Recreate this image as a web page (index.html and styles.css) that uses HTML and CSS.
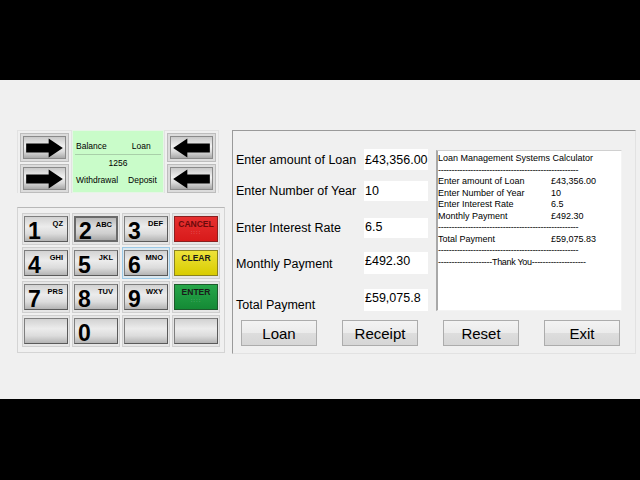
FILE: index.html
```html
<!DOCTYPE html>
<html>
<head>
<meta charset="utf-8">
<link rel="stylesheet" href="styles.css">
</head>
<body>
<div class="screen">
  <div class="bar"></div>
  <div class="app">
    <div class="left">
      <div class="atm-top">
        <div class="arrows">
          <div class="abtn"><div class="abtn-in"><svg viewBox="0 0 46 24" class="arrow"><path d="M1 6.5 H28 V0.5 L45 12 L28 23.5 V17.5 H1 Z"/></svg></div></div>
          <div class="abtn"><div class="abtn-in"><svg viewBox="0 0 46 24" class="arrow"><path d="M1 6.5 H28 V0.5 L45 12 L28 23.5 V17.5 H1 Z"/></svg></div></div>
        </div>
        <div class="green">
          <div class="grow"><span>Balance</span><span class="gr2">Loan</span></div>
          <div class="gmid">1256</div>
          <div class="grow"><span>Withdrawal</span><span class="gr3">Deposit</span></div>
        </div>
        <div class="arrows">
          <div class="abtn"><div class="abtn-in"><svg viewBox="0 0 46 24" class="arrow"><path d="M45 6.5 H18 V0.5 L1 12 L18 23.5 V17.5 H45 Z"/></svg></div></div>
          <div class="abtn"><div class="abtn-in"><svg viewBox="0 0 46 24" class="arrow"><path d="M45 6.5 H18 V0.5 L1 12 L18 23.5 V17.5 H45 Z"/></svg></div></div>
        </div>
      </div>
      <div class="keypad">
        <div class="key"><div class="kin"><b>1</b><i>QZ</i></div></div>
        <div class="key"><div class="kin pressed"><b>2</b><i>ABC</i></div></div>
        <div class="key"><div class="kin"><b>3</b><i>DEF</i></div></div>
        <div class="key"><div class="kin red"><em>CANCEL</em><small>::::</small></div></div>
        <div class="key"><div class="kin"><b>4</b><i>GHI</i></div></div>
        <div class="key"><div class="kin"><b>5</b><i>JKL</i></div></div>
        <div class="key focus"><div class="kin"><b>6</b><i>MNO</i></div></div>
        <div class="key"><div class="kin yellow"><em>CLEAR</em><small></small></div></div>
        <div class="key"><div class="kin"><b>7</b><i>PRS</i></div></div>
        <div class="key"><div class="kin"><b>8</b><i>TUV</i></div></div>
        <div class="key"><div class="kin"><b>9</b><i>WXY</i></div></div>
        <div class="key"><div class="kin green-k"><em>ENTER</em><small>::::</small></div></div>
        <div class="key"><div class="kin"></div></div>
        <div class="key"><div class="kin"><b>0</b></div></div>
        <div class="key"><div class="kin"></div></div>
        <div class="key"><div class="kin"></div></div>
      </div>
    </div>
    <div class="panel">
      <div class="panel-body">
        <div class="form">
          <div class="frow r1"><span class="lbl">Enter amount of Loan</span><span class="inp">£43,356.00</span></div>
          <div class="frow r2"><span class="lbl">Enter Number of Year</span><span class="inp">10</span></div>
          <div class="frow r3"><span class="lbl">Enter Interest Rate</span><span class="inp top">6.5</span></div>
          <div class="frow r4"><span class="lbl low">Monthly Payment</span><span class="inp top">£492.30</span></div>
          <div class="frow r5"><span class="lbl low2">Total Payment</span><span class="inp top">£59,075.8</span></div>
        </div>
        <div class="receipt">
          <div class="rline">Loan Management Systems Calculator</div>
          <div class="rline dash">----------------------------------------------------</div>
          <div class="rline"><span class="rk">Enter amount of Loan</span><span>£43,356.00</span></div>
          <div class="rline"><span class="rk">Enter Number of Year</span><span>10</span></div>
          <div class="rline"><span class="rk">Enter Interest Rate</span><span>6.5</span></div>
          <div class="rline"><span class="rk">Monthly Payment</span><span>£492.30</span></div>
          <div class="rline dash">----------------------------------------------------</div>
          <div class="rline"><span class="rk">Total Payment</span><span>£59,075.83</span></div>
          <div class="rline dash">----------------------------------------------------</div>
          <div class="rline dash">--------------------Thank You--------------------</div>
        </div>
      </div>
      <div class="buttons">
        <button class="btn">Loan</button>
        <button class="btn">Receipt</button>
        <button class="btn">Reset</button>
        <button class="btn">Exit</button>
      </div>
    </div>
  </div>
  <div class="bar"></div>
</div>
</body>
</html>
```

FILE: styles.css
```css
* { box-sizing: border-box; }
html, body { margin: 0; padding: 0; background: #000; }
body { font-family: "Liberation Sans", Arial, sans-serif; color: #000; }
.screen { width: 640px; height: 480px; display: flex; flex-direction: column; }
.bar { height: 80px; background: #000; flex: none; }
.bar:last-child { height: 81px; }
.app { height: 319px; background: #f0f0f0; display: flex; padding: 50px 0 0 17px; }

.left { width: 208px; display: flex; flex-direction: column; }
.atm-top { display: flex; height: 63px; }
.arrows { width: 55px; display: flex; flex-direction: column; gap: 2px; padding: 2px 2px 0 2px; border: 1px solid #e2e2e2; border-bottom: none; height: 63px; }
.abtn { height: 29px; border: 1px solid #bdbdbd; background: #dcdcdc; padding: 2px; }
.abtn-in { height: 100%; border: 1px solid #8a8a8a; background: linear-gradient(#c9c9c9, #f2f2f2 45%, #dadada 70%, #a9a9a9); display: flex; align-items: center; justify-content: center; }
.arrow { width: 41px; height: 20px; fill: #000; }
.green { width: 92px; background: #c9fcc9; height: 63px; padding: 8px 2px 0 2px; font-size: 8.5px; border: 1px solid #e6f5e6; }
.grow { display: flex; height: 14px; align-items: center; padding-left: 1px; }
.gr2 { margin-left: 25px; }
.gr3 { margin-left: 10px; }
.gmid { height: 17px; border-top: 1px solid #a8cfa8; display: flex; align-items: center; justify-content: center; margin: 1px 0 2px; }

.keypad { margin-top: 14px; height: 146px; border: 1px solid #d4d4d4; border-top-color: #b8b8b8; display: grid; grid-template-columns: repeat(4, 48px); grid-template-rows: repeat(4, 32px); gap: 2px; padding: 5px 0 0 4px; }
.key { border: 1px solid #cfcfcf; background: #e6e6e6; padding: 2px 1px 2px 1px; }
.key.focus { border-color: #9cc9e6; background: #dbe8f0; }
.kin { height: 100%; border: 1px solid #7e7e7e; border-right-color: #5a5a5a; border-bottom-color: #5a5a5a; background: linear-gradient(#d2d2d2, #ececec 40%, #dcdcdc 70%, #b4b4b4); position: relative; display: flex; align-items: center; padding-left: 3px; }
.kin.pressed { border: 2px solid #6a6a6a; background: linear-gradient(#b8b8b8, #dedede 40%, #cfcfcf 70%, #a8a8a8); }
.kin b { font-size: 23px; font-weight: bold; line-height: 1; margin-top: 5px; }
.kin i { font-style: normal; font-weight: bold; font-size: 7.5px; position: absolute; top: 2px; right: 4px; }
.kin.red, .kin.yellow, .kin.green-k { flex-direction: column; justify-content: flex-start; align-items: center; padding: 2px 0 0; }
.kin.red { background: linear-gradient(#e63030, #d81a1a); border-color: #8a2020; }
.kin.red em { color: #6a0a0a; }
.kin.yellow { background: linear-gradient(#ede23a, #d9cc00); border-color: #8a8220; }
.kin.green-k { background: linear-gradient(#27a64a, #148a35); border-color: #1d5a2c; }
.kin em { font-style: normal; font-weight: bold; font-size: 8.5px; color: #1a1a1a; }
.kin small { font-size: 6px; color: rgba(255,255,255,0.45); letter-spacing: 1px; line-height: 1; }

.panel { margin-left: 7px; width: 404px; height: 224px; border-top: 1px solid #9a9a9a; border-left: 1px solid #9a9a9a; border-bottom: 1px solid #e2e2e2; border-right: 1px solid #e2e2e2; display: flex; flex-direction: column; }
.panel-body { display: flex; height: 189px; }
.form { width: 203px; padding: 18px 0 0 3px; display: flex; flex-direction: column; }
.frow { display: flex; align-items: center; }
.lbl { width: 128px; font-size: 12.5px; white-space: nowrap; }
.inp { width: 64px; height: 21px; background: #fff; font-size: 12.5px; display: flex; align-items: center; padding-left: 1px; }
.inp.top { align-items: flex-start; padding-top: 2px; }
.r1 { height: 21px; }
.r2 { margin-top: 11px; height: 20px; }
.r3 { margin-top: 17px; height: 20px; }
.r4 { margin-top: 14px; height: 22px; }
.r5 { margin-top: 15px; height: 22px; }
.r3 .inp, .r2 .inp { height: 20px; }
.r4 .inp, .r5 .inp { height: 22px; }
.lbl.low { position: relative; top: 1px; }
.lbl.low2 { position: relative; top: 5px; }

.receipt { margin: 19px 0 0 0; width: 186px; height: 161px; background: #fff; border-left: 2px solid #a8a8a8; border-top: 1px solid #d0d0d0; border-right: 1px solid #f4f4f4; border-bottom: 1px solid #f4f4f4; padding: 2px 0 0 0; font-size: 9px; line-height: 11.5px; overflow: hidden; }
.rline { display: flex; white-space: nowrap; }
.rk { width: 113px; }
.dash { letter-spacing: -0.3px; }

.buttons { display: flex; padding: 0 0 0 8px; gap: 25px; }
.btn { width: 76px; height: 26px; font-family: "Liberation Sans", Arial, sans-serif; font-size: 15px; color: #000; border: 1px solid #acacac; border-radius: 0; background: linear-gradient(#f3f3f3, #ebebeb 50%, #dddddd 51%, #d6d6d6); padding: 0; }
```
